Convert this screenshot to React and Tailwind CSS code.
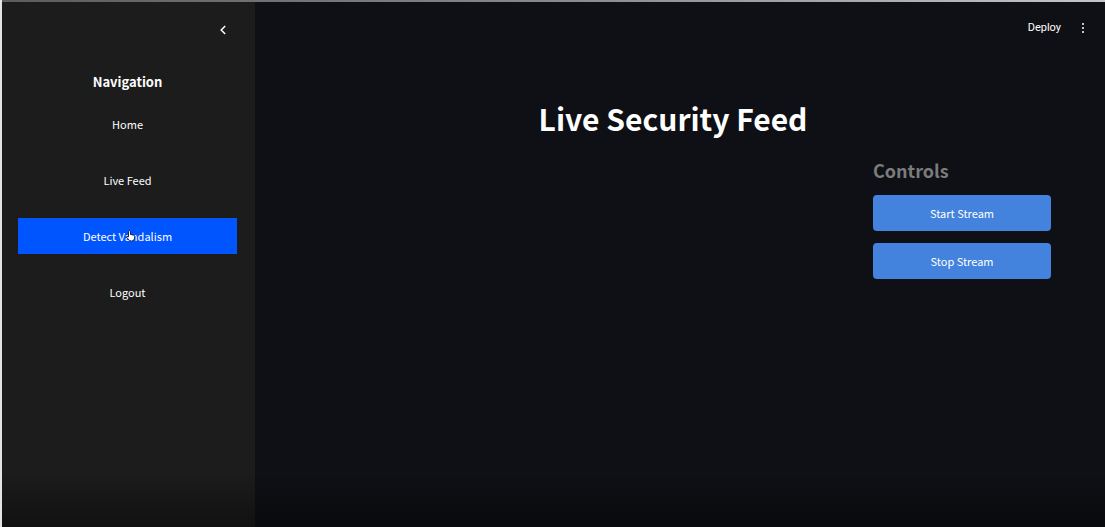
const NAV_ITEMS = [
  { label: 'Home' },
  { label: 'Live Feed' },
  { label: 'Detect Vandalism', active: true },
  { label: 'Logout' },
];

function Sidebar() {
  return (
    <aside className="flex w-[253px] shrink-0 flex-col bg-[#1c1c1c] pr-[18px] pl-4">
      <div className="flex justify-end pt-5 pr-2">
        <button type="button" aria-label="Collapse sidebar" className="flex h-4 w-3 items-center justify-center">
          <svg viewBox="0 0 8 10" className="h-[10px] w-2" fill="none" stroke="currentColor" strokeWidth="1.5">
            <path d="M6.2 1 L2.2 5 L6.2 9" />
          </svg>
        </button>
      </div>
      <h2 className="mt-[34px] text-center text-[13px] leading-5 font-bold">Navigation</h2>
      <nav aria-label="Main" className="mt-[14px] flex flex-col gap-5">
        {NAV_ITEMS.map(({ label, active }) => (
          <button
            key={label}
            type="button"
            aria-current={active ? 'page' : undefined}
            className={`relative h-9 w-full text-[11px] leading-4 ${active ? 'bg-[#0055ff]' : ''}`}
          >
            {label}
            {active && <PointerHand />}
          </button>
        ))}
      </nav>
    </aside>
  );
}

function PointerHand() {
  return (
    <svg
      viewBox="0 0 12 12"
      aria-hidden="true"
      className="pointer-events-none absolute top-3 left-[calc(50%-3px)] h-3 w-3"
    >
      <path
        d="M3.5 1.5 Q4.5 0 5.5 1.5 V4.5 L9 5.2 Q10 5.5 9.8 7 L9 10 Q6.5 12 4.5 10.5 L1.5 7.2 Q1.5 6 3.5 6.8 Z"
        fill="#fff"
        stroke="#12204a"
        strokeWidth="1"
      />
    </svg>
  );
}

function ControlButton({ children }) {
  return (
    <button type="button" className="h-9 w-full rounded bg-[#4383dd] text-[11px] leading-4">
      {children}
    </button>
  );
}

export default function App() {
  return (
    <div className="relative flex min-h-screen flex-col border-l-2 border-l-[#e4e4e4] bg-[#0f1015] font-['Noto_Sans_CJK_SC','Open_Sans',sans-serif] text-white">
      <div className="h-[2px] bg-linear-to-r from-[#5c5c5c] via-[#88898b] to-[#c4c5c9]" />
      <div className="flex flex-1">
        <Sidebar />
        <div className="flex min-w-0 flex-1 flex-col">
          <header className="flex items-center justify-end gap-4 pt-4 pr-4">
            <button type="button" className="font-[Roboto,sans-serif] text-[11px] leading-5">
              Deploy
            </button>
            <button type="button" aria-label="More options" className="flex h-4 w-3 items-center justify-center">
              <svg viewBox="0 0 4 12" className="h-3 w-1" fill="currentColor">
                <circle cx="2" cy="2" r="1" />
                <circle cx="2" cy="6" r="1" />
                <circle cx="2" cy="10" r="1" />
              </svg>
            </button>
          </header>
          <main className="flex flex-col pr-[54px] pl-10">
            <h1 className="mt-[60px] text-center text-[30px] leading-10 font-bold">Live Security Feed</h1>
            <section className="mt-5 flex w-[178px] flex-col gap-3 self-end">
              <h2 className="text-lg leading-[25px] font-bold text-[#7c7c7d]">Controls</h2>
              <ControlButton>Start Stream</ControlButton>
              <ControlButton>Stop Stream</ControlButton>
            </section>
          </main>
        </div>
      </div>
      <div className="pointer-events-none absolute inset-x-0 bottom-0 h-14 bg-linear-to-b from-transparent to-black/40" />
    </div>
  );
}
